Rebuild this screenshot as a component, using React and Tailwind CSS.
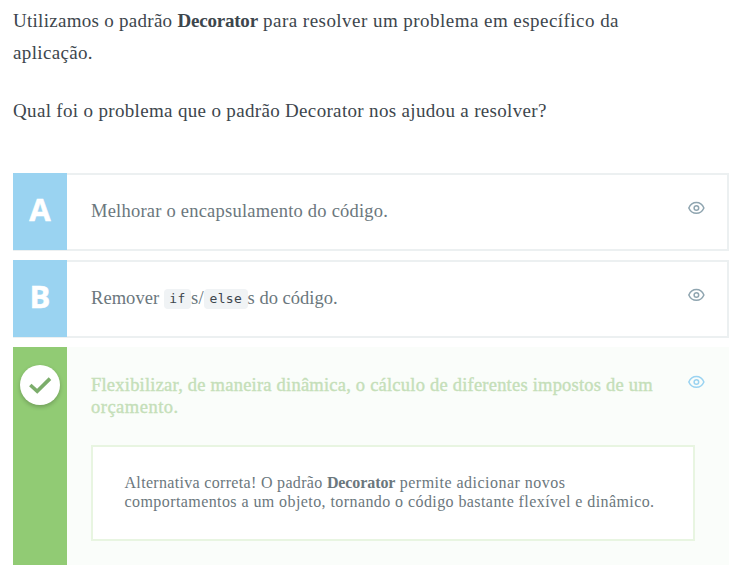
import React from "react";

function EyeIcon({ className }) {
  return (
    <svg className={className} width="17" height="14" viewBox="0 0 17 14" fill="none" stroke="currentColor">
      <path d="M0.8 7C2.4 3.4 5.2 1.6 8.4 1.6S14.3 3.4 15.9 7C14.3 10.6 11.5 12.3 8.4 12.3S2.4 10.6 0.8 7Z" strokeWidth="1.5" />
      <circle cx="8.4" cy="7" r="2.3" strokeWidth="1.5" />
    </svg>
  );
}

function Code({ children }) {
  return (
    <code className="inline-block h-5 rounded-[4px] bg-[#f0f3f5] px-[5.5px] align-[1px] font-['DejaVu_Sans_Mono',monospace] text-[13px] leading-[19px] tracking-[0.3px] text-[#3d464d]">
      {children}
    </code>
  );
}

function Option({ letter, children }) {
  return (
    <li className="flex h-[78px] border-2 border-l-0 border-[#ecf0f1]">
      <div className="-mt-0.5 -mb-px flex w-[54px] shrink-0 justify-center bg-[#9ad3f1] pt-[15px] font-['Open_Sans',sans-serif] text-[31px] leading-[42px] font-bold text-white [-webkit-text-stroke:0.5px_white]">
        {letter}
      </div>
      <div className="flex-1 pt-[25px] pl-6 text-[18.5px] leading-[22px] whitespace-nowrap text-[#6b777d]">{children}</div>
      <EyeIcon className="mt-[26px] mr-[22px] text-[#8fa5b0]" />
    </li>
  );
}

export default function App() {
  return (
    <main className="h-[579px] w-[742px] overflow-hidden bg-white pr-[13px] pl-[13px] font-['Liberation_Serif',serif]">
      <div className="pt-[5px] text-[19px] leading-8 whitespace-nowrap text-[#3d464d]">
        <p>
          <span className="tracking-[0.28px]">Utilizamos o padrão </span>
          <strong className="font-bold tracking-[-0.2px]">Decorator</strong>
          <span className="tracking-[0.46px]"> para resolver um problema em específico da</span>
          <br />
          <span className="tracking-[0.35px]">aplicação.</span>
        </p>
        <p className="mt-[26px] tracking-[0.33px]">Qual foi o problema que o padrão Decorator nos ajudou a resolver?</p>
      </div>
      <ul className="mt-[46px] flex flex-col gap-[9px]">
        <Option letter="A">
          <span className="tracking-[0.22px]">Melhorar o encapsulamento do código.</span>
        </Option>
        <Option letter="B">
          <span className="tracking-[0.05px]">Remover </span>
          <Code>if</Code>
          <span className="tracking-[0.3px]">s/</span>
          <Code>else</Code>
          <span className="tracking-[0px]">s do código.</span>
        </Option>
        <li className="flex h-[218px] bg-[#fafdfa]">
          <div className="flex w-[54px] shrink-0 justify-center bg-[#91cb74] pt-[18px]">
            <div className="flex size-10 items-center justify-center rounded-full bg-white shadow-[0_2px_4px_rgba(0,0,0,0.22)]">
              <svg width="24" height="20" viewBox="0 0 24 20" fill="none" stroke="#7cad6b" strokeWidth="3.6">
                <path d="M2.3 10L9.2 16.3L22 3.6" />
              </svg>
            </div>
          </div>
          <div className="ml-6 w-[604px] pt-[27px]">
            <p className="text-[18.5px] leading-[22px] whitespace-nowrap text-[#c5dfb9] [-webkit-text-stroke:0.4px_currentColor]">
              <span className="tracking-[0.22px]">Flexibilizar, de maneira dinâmica, o cálculo de diferentes impostos de um</span>
              <br />
              <span className="tracking-[0.5px]">orçamento.</span>
            </p>
            <div className="mt-[27px] h-24 border-2 border-[#e8f5e1] bg-white pt-[26px] pl-[31.5px] text-[16px] leading-[19px] whitespace-nowrap text-[#6b777d]">
              <span className="tracking-[0.32px]">Alternativa correta! O padrão </span>
              <strong className="font-bold tracking-[-0.1px]">Decorator</strong>
              <span className="tracking-[0.48px]"> permite adicionar novos</span>
              <br />
              <span className="tracking-[0.42px]">comportamentos a um objeto, tornando o código bastante flexível e dinâmico.</span>
            </div>
          </div>
          <EyeIcon className="mt-7 -ml-[7px] text-[#9ad3f1]" />
        </li>
      </ul>
    </main>
  );
}
